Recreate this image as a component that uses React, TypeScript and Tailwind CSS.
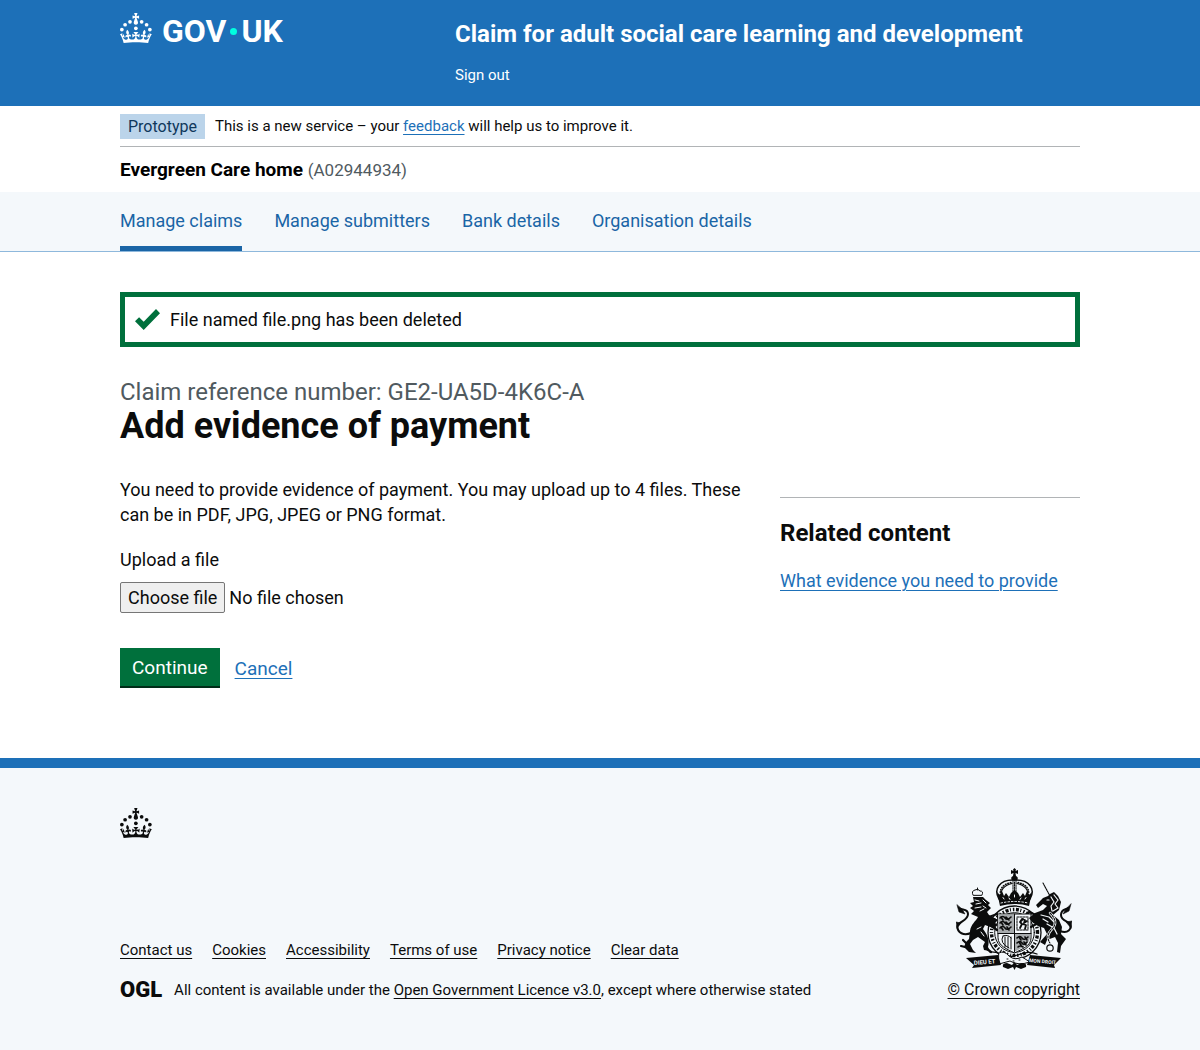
const navItems = ["Manage claims", "Manage submitters", "Bank details", "Organisation details"];
const footerLinks = ["Contact us", "Cookies", "Accessibility", "Terms of use", "Privacy notice", "Clear data"];

const link = "text-[#1d70b8] underline decoration-1 underline-offset-[3px]";
const footerLink = "underline decoration-1 underline-offset-[3px]";

function Crown() {
  return (
    <svg viewBox="0 0 64 60" className="h-[30px] w-8 shrink-0" fill="currentColor" aria-hidden="true">
      <circle cx="20" cy="17.6" r="3.7" />
      <circle cx="10.2" cy="23.5" r="3.7" />
      <circle cx="3.7" cy="33.2" r="3.7" />
      <circle cx="31.7" cy="30.6" r="3.7" />
      <circle cx="43.3" cy="17.6" r="3.7" />
      <circle cx="53.2" cy="23.5" r="3.7" />
      <circle cx="59.7" cy="33.2" r="3.7" />
      <path d="M33.1,9.8c.2-.1.3-.3.5-.5l4.6,2.4v-6.8l-4.6,1.5c-.1-.2-.3-.3-.5-.5l1.9-5.9h-6.7l1.9,5.9c-.2.1-.3.3-.5.5l-4.6-1.5v6.8l4.6-2.4c.1.2.3.3.5.5l-2.6,8c-.9,2.8,1.2,5.7,4.1,5.7h0c3,0,5.1-2.9,4.1-5.7l-2.6-8ZM37,37.9s-3.4,3.8-4.1,6.1c2.2,0,4.2-.5,6.4-2.8l-.7,8.5c-2-2.8-4.4-4.1-5.7-3.8.1,3.1.5,6.7,5.8,7.2,3.7.3,6.7-1.5,7-3.8.4-2.6-2-4.3-3.7-1.6-1.4-4.5,2.4-6.1,4.9-3.2-1.9-4.5-1.8-7.7,2.4-10.9,3,4,2.6,7.3-1.2,11.1,2.4-1.3,6.2,0,4,4.6-1.2-2.8-3.7-2.2-4.2.2-.3,1.7.7,3.7,3,4.2,1.9.3,4.7-.9,7-5.9-1.3,0-2.4.7-3.9,1.7l2.4-8c.6,2.3,1.4,3.7,2.2,4.5.6-1.6.5-2.8,0-5.3l5,1.8c-2.6,3.6-5.2,8.7-7.3,17.5-7.4-1.1-15.7-1.7-24.5-1.7h0c-8.8,0-17.1.6-24.5,1.7-2.1-8.9-4.7-13.9-7.3-17.5l5-1.8c-.5,2.5-.6,3.7,0,5.3.8-.8,1.6-2.3,2.2-4.5l2.4,8c-1.5-1-2.6-1.7-3.9-1.7,2.3,5,5.2,6.2,7,5.9,2.3-.4,3.3-2.4,3-4.2-.5-2.4-3-3.1-4.2-.2-2.2-4.6,1.6-6,4-4.6-3.7-3.7-4.2-7.1-1.2-11.1,4.2,3.2,4.3,6.4,2.4,10.9,2.5-2.8,6.3-1.3,4.9,3.2-1.8-2.7-4.1-1-3.7,1.6.3,2.3,3.3,4.1,7,3.8,5.4-.5,5.7-4.2,5.8-7.2-1.3-.2-3.7,1-5.7,3.8l-.7-8.5c2.2,2.3,4.2,2.7,6.4,2.8-.7-2.3-4.1-6.1-4.1-6.1h10.6,0Z" />
    </svg>
  );
}

function RoyalArms() {
  return (
    <svg viewBox="0 0 116 102" className="h-[102px] w-[116px]" fill="none" stroke="#0b0c0c" strokeLinecap="round" strokeLinejoin="round" aria-hidden="true">
      {/* garter and shield */}
      <circle cx="58.5" cy="64.5" r="26.5" strokeWidth="1.3" fill="#f4f8fb" />
      <circle cx="58.5" cy="64.5" r="23" strokeWidth="3.4" strokeDasharray="1.5 1.7 3 1.4 1 2" strokeLinecap="butt" />
      <circle cx="58.5" cy="64.5" r="19.8" strokeWidth="1" />
      <path d="M42 46H75V70C75 78 66 81 58.500 85C51 81 42 78 42 70Z" fill="#f4f8fb" strokeWidth="1" />
      <path d="M42.500 46.500H58V65H42.500ZM59 66H74.500C75 76 66 80 59 83.500Z" fill="#a7abad" stroke="none" />
      <path d="M58.500 46V84M42 65.500H75" strokeWidth="1" />
      <path d="M44 50q3-3 5 0t6-1M44 55q3-3 5 0t6-1M44 60q3-3 5 0t6-1M45 49l2 3M50 49l3 3M45 54l2 3M50 54l3 3M45 59l2 3M51 59l2 3M61 70q3-3 5 0t6-1M61 75q3-3 5 0t5-1M62 79q2-2 5 0M63 69l2 3M69 69l2 3M63 74l2 3M68 74l2 3" strokeWidth="1.6" />
      <path d="M61 49H72V62H61Z" strokeWidth="1" strokeDasharray="2 1" />
      <path d="M64 60L66 56L64 54L66 51L69 52L68 55L71 53M66 56L70 57L69 61M67 51L65 53" strokeWidth="1.8" />
      <path d="M47 68Q43 75 53 80M49 69V79M52 69V80M55 69V81M47 68Q52 66 55 70" strokeWidth="1" />

      {/* crown */}
      <path d="M43 31C37 21 44 12 56.500 12M74 31C80 21 73 12 60.500 12" strokeWidth="1.5" />
      <path d="M46 29C43 22 49 17 56 15.500M71 29C74 22 68 17 61 15.500" strokeWidth="1.2" />
      <path d="M44.500 27C43 19 50 15 56 14.500M72.500 27C74 19 67 15 61 14.500" strokeWidth="1.6" strokeDasharray=".5 2" />
      <path d="M57 12V29M60 12V29M58.500 14V28" strokeWidth="1" strokeDasharray="1.5 1" />
      <path d="M58.500 0L60 1.500L59.500 3L62 2V6L59.500 5L60 8C63 9 62 13 58.500 13S54 9 57 8L57.500 5L55 6V2L57.500 3L57 1.500Z" fill="#0b0c0c" stroke="none" />
      <path d="M41 24L44 27L46 23L48 28L50 25L53 29L55 25L58.500 22L62 25L64 29L67 25L69 28L71 23L73 27L76 24L73 38Q58.500 34 44 38Z" fill="#0b0c0c" stroke="none" />
      <path d="M45 35Q58.500 32 72 35" stroke="#f4f8fb" strokeWidth="1" strokeDasharray="1.5 2" />
      <path d="M47 29.500L48 31M53 30L54 31.500M58.500 27V29M64 31.500L65 30M69 31L70 29.500" stroke="#f4f8fb" strokeWidth="1" />

      {/* lion */}
      <path d="M17 27Q15 23 19 22Q22 20 24 23Q28 23 26 27ZM21.500 22V20" strokeWidth="1" />
      <path d="M17 29L27 29L30 32L34 35L32 37L35 40L31 44L33 47L42 52L39 55L42 57L37 60L29 57L27 61C31 66 34 72 32 79L34 83L28 82L27 78L29 74L22 69L17 72L14 76L17 82L20 85L13 84L8 79L10 74L13 71L14 63C15 56 20 53 22 49L15 46L18 43L14 40L17 38L14 35L18 34Z" fill="#0b0c0c" stroke="none" />
      <path d="M19 32l4 1M20 36l5-1M19 40l6-1M24 43l4-2M27 32l3 3M27 38l3 2M21 61l4-2M25 64l3 4" stroke="#f4f8fb" strokeWidth="1" />
      <path d="M15 65C8 68 1 65 1.500 58C3 53 12 53 12 46C12 41 7 42 5 41" strokeWidth="2" />
      <path d="M1 37L3 44L9 46L6 41ZM0 54L5 55L1 60Z" fill="#0b0c0c" strokeWidth=".6" />
      <path d="M33 49L41 46M34 57L41 62M10 75L7 72M9 79L5 78M31 81L35 84" strokeWidth="2.200" />

      {/* unicorn */}
      <path d="M87 15L94 28" strokeWidth="1.1" strokeDasharray="1.500 .7" />
      <path d="M94 26L98 24L102 28L105 34L103 42L97 47L103 52L106 59L105 66L110 71L105 78L104 85L101 84L102 75L99 69L91 72L89 77L84 74L91 66L88 60L82 58L76 54L73 50L79 45L87 42L91 38L87 36L82 40L80 37L87 30L92 28Z" fill="#0b0c0c" stroke="none" />
      <path d="M98 27l4 5l-3 4l3 4l-5 3M95 29l3 5l-3 4l1 5M91 32h2M85 47l8 2l5 5M91 56l7 4l3 6M87 51l5 3" stroke="#f4f8fb" strokeWidth="1.200" />
      <path d="M94 45Q103 54 96 61T94 75" stroke="#f4f8fb" strokeWidth="2.500" />
      <path d="M94 45Q103 54 96 61T94 75" strokeWidth="1.100" strokeDasharray="2 1.300" />
      <circle cx="94" cy="80" r="3.200" strokeWidth="1.200" />
      <path d="M104 63C112 66 116 61 114 56C112 53 105 53 105 47C105 41 110 42 112 40" strokeWidth="2" />
      <path d="M115 36L113 43L107 46L110 41ZM116 53L110 54L115 60Z" fill="#0b0c0c" strokeWidth=".6" />
      <path d="M80 47L73 44M82 55L75 59" strokeWidth="2.200" />

      {/* motto scroll and plants */}
      <path d="M34 84C43 83 49 90 58 88S72 82 81 86" strokeWidth="1.300" />
      <path d="M43 85Q48 82 53 88Q59 93 66 89L74 94Q62 98 54 93L43 96Z" fill="#f4f8fb" strokeWidth="1" />
      <path d="M10 90L42 87L45 97L16 100L18 97Z" fill="#0b0c0c" stroke="none" />
      <path d="M105 90L74 87L71 97L99 100L98 97Z" fill="#0b0c0c" stroke="none" />
      <text x="18" y="97" transform="rotate(-5 18 97)" fill="#f4f8fb" stroke="none" fontFamily="Roboto, sans-serif" fontSize="6" fontWeight="700">DIEU ET</text>
      <text x="73" y="94" transform="rotate(5 73 94)" fill="#f4f8fb" stroke="none" fontFamily="Roboto, sans-serif" fontSize="5" fontWeight="700">MON DROIT</text>
      <path d="M47 99Q46 95 51 95L56 97L58.500 94L61 97L66 95Q71 95 70 99L65 101L60 99L58.500 102L57 99L52 101Z" fill="#0b0c0c" stroke="none" />
      <path d="M53 97v2M64 97v2M51 91h1M57 93h1M63 92h1" stroke="#0b0c0c" strokeWidth="1" />
    </svg>
  );
}

export default function App() {
  return (
    <div className="flex min-h-screen flex-col bg-[#f4f8fb] font-[Roboto,sans-serif] text-[#0b0c0c]">
      <header className="bg-[#1d70b8] text-white">
        <div className="mx-auto flex max-w-[960px] pb-[21px]">
          <div className="w-[335px] shrink-0 pt-[13px]">
            <a href="#" className="flex w-fit items-start" aria-label="GOV.UK">
              <Crown />
              <span className="ml-[10px] flex items-center text-[32px] leading-[36px] font-bold">
                GOV
                <span className="mx-1 size-[7px] rounded-full bg-[#00ffe0]" />
                UK
              </span>
            </a>
          </div>
          <div className="pt-5">
            <a href="#" className="block text-2xl leading-7 font-bold">Claim for adult social care learning and development</a>
            <a href="#" className="mt-[17px] block w-fit text-[15px] leading-5">Sign out</a>
          </div>
        </div>
      </header>

      <div className="bg-white">
        <div className="mx-auto max-w-[960px]">
          <div className="flex items-center border-b border-[#b1b4b6] pt-2 pb-[7px] text-[15px] leading-[25px]">
            <strong className="mr-[10px] bg-[#bbd4ea] px-2 text-base leading-[25px] font-normal text-[#0f385c]">Prototype</strong>
            <span>
              This is a new service – your <a href="#" className={link}>feedback</a> will help us to improve it.
            </span>
          </div>
          <p className="py-[10px] text-[19px] leading-[25px] font-bold text-black">
            Evergreen Care home <span className="text-[17px] leading-5 font-normal text-[#505a5f]">(A02944934)</span>
          </p>
        </div>
      </div>

      <nav className="border-b border-[#8eb8dc] bg-[#f4f8fb]">
        <ul className="mx-auto flex max-w-[960px] gap-8 text-lg leading-6">
          {navItems.map((item, i) => (
            <li key={item} className={i === 0 ? "border-b-[5px] border-[#1a65a6]" : "border-b-[5px] border-transparent"}>
              <a href="#" className="block pt-[17px] pb-[13px] text-[#1a65a6]">{item}</a>
            </li>
          ))}
        </ul>
      </nav>

      <main className="bg-white pt-10 pb-[70px]">
        <div className="mx-auto max-w-[960px]">
          <div role="status" className="flex items-center border-[5px] border-[#00703c] px-[10px] py-[10px] text-lg leading-[25px]">
            <svg viewBox="0 0 25 25" className="mr-[10px] size-[25px]" fill="#00703c" aria-hidden="true">
              <path d="M25 6.200L8.700 23L0 14.300L4.100 10.200L8.700 14.800L21 2.100Z" />
            </svg>
            File named file.png has been deleted
          </div>
          <h1 className="mt-[30px] text-4xl leading-[38px] font-bold">
            <span className="block text-2xl leading-[30px] font-normal text-[#505a5f]">Claim reference number: GE2-UA5D-4K6C-A</span>
            Add evidence of payment
          </h1>
          <div className="mt-8 flex gap-[30px] text-lg leading-[25px]">
            <form className="flex-1">
              <p>You need to provide evidence of payment. You may upload up to 4 files. These can be in PDF, JPG, JPEG or PNG format.</p>
              <label htmlFor="evidence" className="mt-5 block">Upload a file</label>
              <div className="relative mt-[10px] flex w-fit items-center">
                <span aria-hidden="true" className="mr-1 rounded-xs border border-[#767676] bg-[#efefef] px-[7px] py-[2px]">Choose file</span>
                <span aria-hidden="true">No file chosen</span>
                <input id="evidence" type="file" className="absolute inset-0 w-full opacity-0" />
              </div>
              <div className="mt-[35px] flex items-center gap-[15px] text-[19px] leading-[25px]">
                <button type="button" className="border-b-2 border-[#002d18] bg-[#00703c] px-3 pt-[7px] pb-[6px] text-white">Continue</button>
                <a href="#" className={link}>Cancel</a>
              </div>
            </form>
            <aside className="mt-5 w-[300px] self-start border-t border-[#b1b4b6] pt-5">
              <h2 className="text-2xl leading-[30px] font-bold">Related content</h2>
              <a href="#" className={"mt-5 inline-block " + link}>What evidence you need to provide</a>
            </aside>
          </div>
        </div>
      </main>

      <footer className="border-t-[10px] border-[#1d70b8] bg-[#f4f8fb] pt-10 pb-[50px] text-[15px] leading-5">
        <div className="mx-auto max-w-[960px]">
          <Crown />
          <div className="mt-[30px] flex items-end justify-between">
            <div>
              <ul className="flex gap-5">
                {footerLinks.map((item) => (
                  <li key={item}>
                    <a href="#" className={footerLink}>{item}</a>
                  </li>
                ))}
              </ul>
              <div className="mt-5 flex items-center">
                <span className="mr-3 text-[22px] leading-5 font-black">OGL</span>
                <span>
                  All content is available under the <a href="#" className={footerLink}>Open Government Licence v3.0</a>, except where otherwise stated
                </span>
              </div>
            </div>
            <a href="#" className={"flex flex-col items-center gap-[10px] text-base leading-5 " + footerLink}>
              <RoyalArms />
              © Crown copyright
            </a>
          </div>
        </div>
      </footer>
    </div>
  );
}
